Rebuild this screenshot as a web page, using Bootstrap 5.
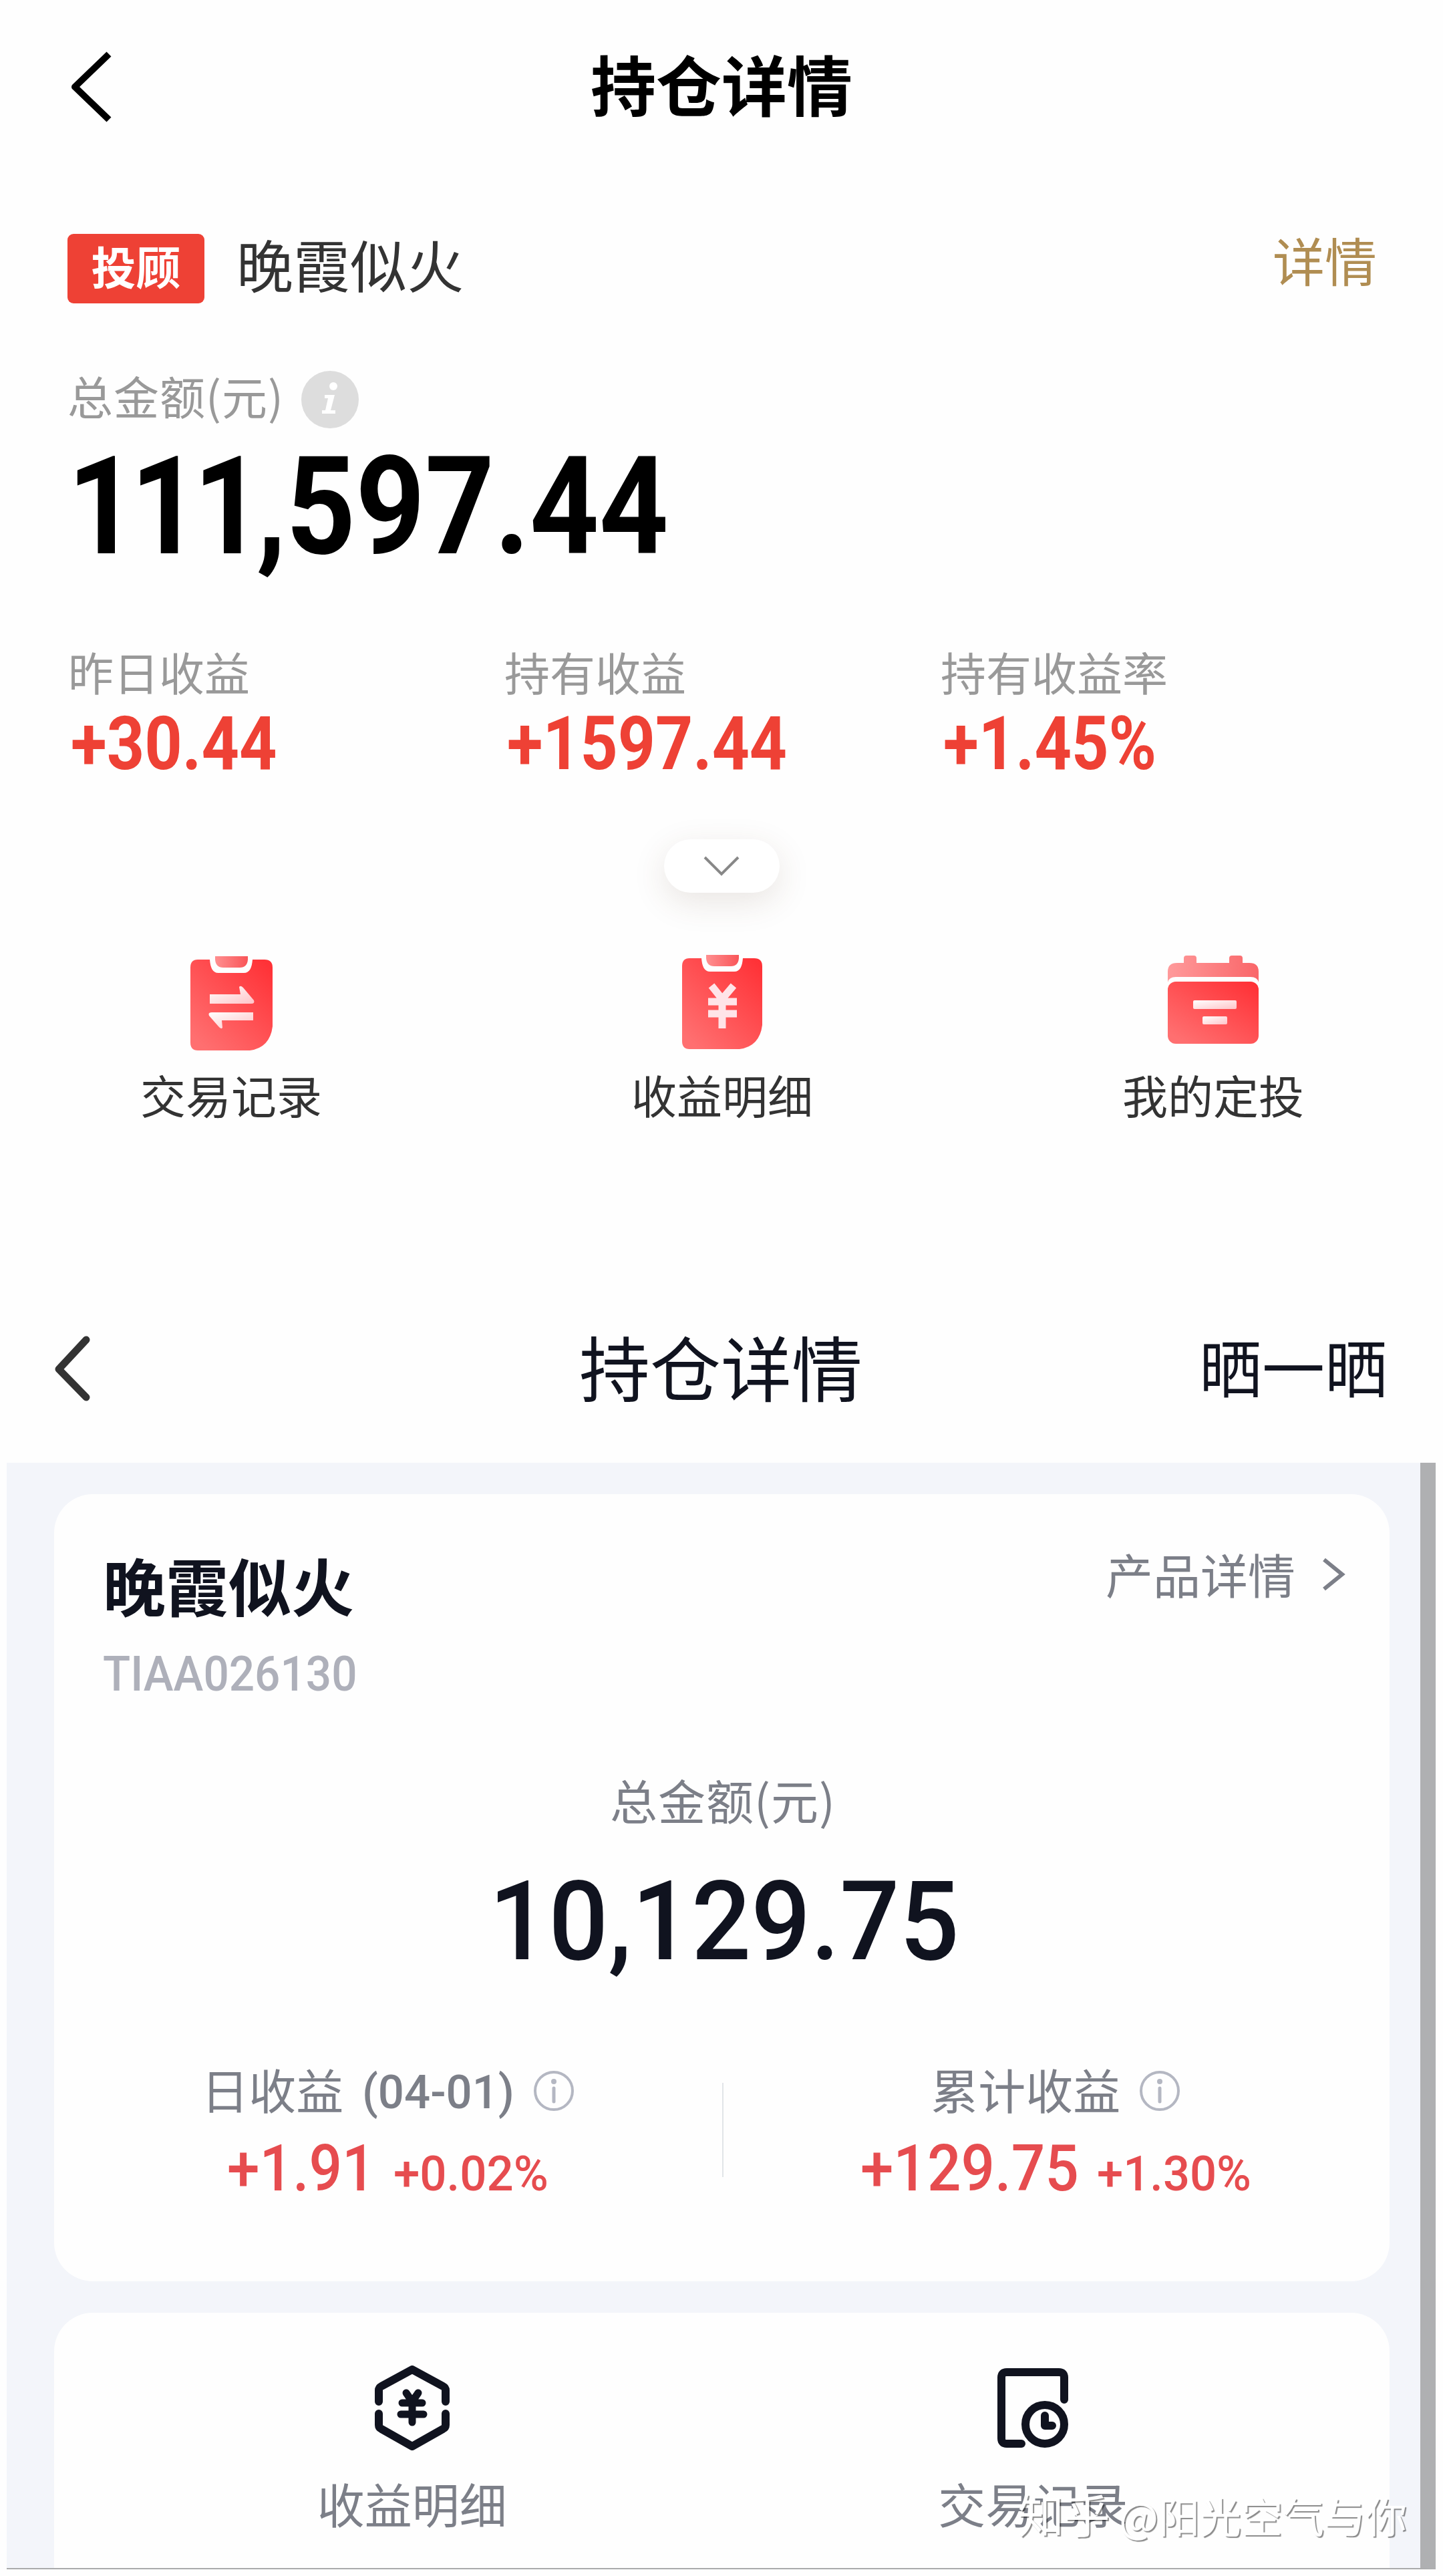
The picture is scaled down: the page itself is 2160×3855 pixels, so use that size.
<!DOCTYPE html>
<html lang="zh-CN">
    <head>
        <meta charset="UTF-8">
        <title>持仓详情</title>
        <link rel="stylesheet" href="https://cdn.jsdelivr.net/npm/bootstrap@5.3.0/dist/css/bootstrap.min.css">
        <style>
            body {
                width: 2160px;
                height: 3855px;
                overflow: hidden;
                background-color: #fefefe;
                color: #333;
                font-family: "Noto Sans CJK SC", sans-serif;
                line-height: 1;
                white-space: nowrap;
            }
            svg { display: block; flex: none; }

            /* números: estirados al ancho de data-w */
            .num {
                display: inline-block;
                vertical-align: top;
                font-family: Roboto, "Noto Sans CJK SC", sans-serif;
                line-height: 1;
            }
            .num > span {
                display: inline-block;
                transform-origin: 0 50%;
            }

            /* primera pantalla */
            .screen-a { height: 1900px; }
            .bar-a { height: 350px; padding: 74px 101px 0; }
            .bar-a .title-a { font-size: 98px; font-weight: 700; color: #000; }
            .side { width: 300px; }
            .name-row { height: 104px; padding: 0 99px 0 101px; }
            .tag {
                width: 205px;
                height: 104px;
                border-radius: 9px;
                background: #ee4135;
                color: #fff;
                font-size: 67px;
                font-weight: 700;
                padding-bottom: 12px;
            }
            .fund-a { font-size: 85px; margin: 1px 0 0 48px; }
            .link-a { font-size: 78px; color: #b08d52; margin-top: -1px; }
            .total-a { padding: 0 101px; margin-top: 101px; height: 102px; }
            .total-a .gray-a { margin: 3px 26px 0 0; letter-spacing: 1px; }
            .gray-a { font-size: 68px; color: #999; }
            .amount-a { padding-left: 101px; font-size: 204px; font-weight: 700; color: #000; height: 314px; }
            .amount-a .ones { letter-spacing: -11px; }
            .stats-a { padding-left: 102px; }
            .stats-a .cell { width: 653px; }
            .stats-a .num { font-size: 112px; font-weight: 700; color: #ee4135; margin: 18px 0 0 4px; }
            .pill {
                width: 173px;
                height: 80px;
                margin: 87px auto 0;
                border-radius: 40px;
                background: #fff;
                box-shadow: 0 14px 50px rgba(90, 60, 40, .13);
            }
            .acts-a { padding: 0 208px 0 210px; margin-top: 92px; }
            .acts-a .act { width: 272px; font-size: 68px; }
            .acts-a svg { margin-bottom: 30px; }

            /* segunda pantalla */
            .bar-b { height: 289px; padding: 90px 83px 0 81px; color: #10131f; }
            .bar-b .title-b { font-size: 106px; }
            .bar-b .share { font-size: 94px; margin-top: 6px; }
            .panel {
                width: 2139px;
                height: 1656px;
                margin-left: 10px;
                padding: 47px 46px 0 71px;
                overflow: hidden;
                background: #f3f5fa;
                border-right: 23px solid #afb0b2;
                border-bottom: 2px solid #aaabac;
            }
            .box {
                border-radius: 58px;
                background: #fefefe;
                color: #7c7f88;
                font-size: 71px;
            }
            .box-main { height: 1178px; padding-top: 88px; }
            .box-main .top-line { padding: 0 66px 0 73px; height: 145px; }
            .fund-b { font-size: 94px; font-weight: 700; color: #10131f; }
            .more { margin-top: -5px; }
            .more svg { margin: 12px 0 0 39px; }
            .code { font-size: 73px; font-weight: 500; color: #aeb0ba; padding-left: 73px; height: 188px; }
            .total-b { letter-spacing: 1px; padding-left: 3px; }
            .amount-b { font-size: 166px; font-weight: 500; color: #10131f; margin-top: 65px; padding-left: 6px; height: 297px; }
            .split { width: 2px; height: 141px; background: #e2e5e8; top: 27px; left: 50%; }
            .info { margin: 8px 0 0 28px; }
            .gain { color: #e64c4f; font-weight: 500; margin-top: 36px; }
            .gain .big { font-size: 96px; }
            .gain .pct { font-size: 73px; margin-left: 27px; }
            .day { font-size: 71px; font-weight: 500; margin: 5px 0 -5px 28px; }
            .box-acts { height: 440px; margin-top: 47px; padding: 79px 69px 0 71px; }
            .box-acts svg { height: 127px; margin-bottom: 43px; }
            .watermark {
                right: 54px;
                top: 3727px;
                font-size: 62px;
                color: #fff;
                text-shadow: 2px 2px 1px rgba(0, 0, 0, .45);
            }
            .watermark .site { font-size: 69px; }
        </style>
    </head>
    <body class="position-relative">

        <section class="screen-a">
            <div class="bar-a d-flex justify-content-between">
                <div class="side">
                    <svg width="72" height="112" viewBox="0 0 72 112"><path d="M62 7 L11 56 L62 105" fill="none" stroke="#000" stroke-width="10" stroke-linejoin="round"/></svg>
                </div>
                <div class="title-a">持仓详情</div>
                <div class="side"></div>
            </div>

            <div class="name-row d-flex align-items-start">
                <div class="tag d-flex align-items-center justify-content-center">投顾</div>
                <div class="fund-a">晚霞似火</div>
                <div class="link-a ms-auto">详情</div>
            </div>

            <div class="total-a d-flex">
                <div class="gray-a">总金额(元)</div>
                <svg width="86" height="86" viewBox="0 0 86 86">
                    <circle cx="43" cy="43" r="43" fill="#ddd"/>
                    <circle cx="48" cy="23" r="6" fill="#fff"/>
                    <path d="M35 36 H50 L44 59 H51 V64 H31 V59 H36 L40 41 H35 Z" fill="#fff"/>
                </svg>
            </div>
            <div class="amount-a"><span class="num" data-w="900"><span><span class="ones">111</span>,597.44</span></span></div>

            <div class="stats-a d-flex">
                <div class="cell">
                    <div class="gray-a">昨日收益</div>
                    <span class="num" data-w="309"><span>+30.44</span></span>
                </div>
                <div class="cell">
                    <div class="gray-a">持有收益</div>
                    <span class="num" data-w="419"><span>+1597.44</span></span>
                </div>
                <div class="cell">
                    <div class="gray-a">持有收益率</div>
                    <span class="num" data-w="319"><span>+1.45%</span></span>
                </div>
            </div>

            <div class="pill d-flex align-items-center justify-content-center">
                <svg width="54" height="32" viewBox="0 0 54 32"><path d="M2 3 L27 28 L52 3" fill="none" stroke="#888" stroke-width="4"/></svg>
            </div>

            <div class="acts-a d-flex justify-content-between">
                <div class="act d-flex flex-column align-items-center">
                    <svg width="124" height="146" viewBox="0 0 124 146">
                        <defs>
                            <linearGradient id="rojo" x1="1" y1="0.1" x2="0.2" y2="1">
                                <stop offset="0" stop-color="#ff3237"/>
                                <stop offset="1" stop-color="#ff6f70"/>
                            </linearGradient>
                            <linearGradient id="claro" x1="0" y1="0" x2="1" y2="0">
                                <stop offset="0" stop-color="#ff8f90"/>
                                <stop offset="1" stop-color="#f95558"/>
                            </linearGradient>
                            <linearGradient id="blanco" x1="0" y1="0" x2="1" y2="1">
                                <stop offset="0" stop-color="#fff"/>
                                <stop offset="1" stop-color="#ffc4c8"/>
                            </linearGradient>
                        </defs>
                        <path d="M12 8 H30 C31 20 34 28 43 28 H81 C90 28 93 20 94 8 H112 Q124 8 124 20 V108 Q120 140 90 144 H12 Q1 144 1 132 V20 Q1 8 12 8 Z" fill="url(#rojo)"/>
                        <path d="M38 3 H87 V8 Q86 20 75 20 H50 Q39 20 38 8 Z" fill="url(#claro)"/>
                        <path d="M30 60 H76 L74 49 Q76 46 80 50 L96 69 Q98 74 92 74 H30 Z" fill="url(#blanco)"/>
                        <path d="M95 87 V99 H48 L49 110 Q47 113 43 108 L29 92 Q27 87 33 87 Z" fill="url(#blanco)"/>
                    </svg>
                    <div>交易记录</div>
                </div>
                <div class="act d-flex flex-column align-items-center">
                    <svg width="124" height="146" viewBox="0 0 124 146">
                        <path d="M13 6 H31 C32 18 35 26 44 26 H80 C89 26 92 18 93 6 H110 Q122 6 122 18 V106 Q118 138 88 142 H13 Q2 142 2 130 V18 Q2 6 13 6 Z" fill="url(#rojo)"/>
                        <path d="M38 1 H87 V6 Q86 18 75 18 H50 Q39 18 38 6 Z" fill="url(#claro)"/>
                        <path d="M46 47 L62 67 L79 47 M62 66 V111 M41 71 H84 M41 89 H84" fill="none" stroke="#ffe4e8" stroke-width="11"/>
                    </svg>
                    <div>收益明细</div>
                </div>
                <div class="act d-flex flex-column align-items-center">
                    <svg width="136" height="146" viewBox="0 0 136 146">
                        <path d="M24 13 V6 Q24 2 28 2 H39 Q43 2 43 6 V13 H92 V6 Q92 2 96 2 H108 Q112 2 112 6 V13 H122 Q136 13 136 26 V42 Q134 34 124 34 H12 Q2 34 0 42 V26 Q0 13 14 13 Z" fill="url(#claro)" opacity=".9"/>
                        <rect x="0" y="41" width="136" height="93" rx="12" fill="url(#rojo)"/>
                        <rect x="38" y="69" width="65" height="13" rx="2" fill="url(#blanco)"/>
                        <rect x="52" y="93" width="37" height="12" rx="2" fill="url(#blanco)"/>
                    </svg>
                    <div>我的定投</div>
                </div>
            </div>
        </section>

        <section>
            <div class="bar-b d-flex justify-content-between">
                <div class="side">
                    <svg width="56" height="110" viewBox="0 0 56 110"><path d="M48 15 L7 59 L48 101" fill="none" stroke="#333" stroke-width="11" stroke-linecap="round" stroke-linejoin="round"/></svg>
                </div>
                <div class="title-b">持仓详情</div>
                <div class="side share text-end">晒一晒</div>
            </div>

            <div class="panel">
                <div class="box box-main">
                    <div class="top-line d-flex justify-content-between">
                        <div class="fund-b">晚霞似火</div>
                        <div class="more d-flex">
                            <div>产品详情</div>
                            <svg width="36" height="50" viewBox="0 0 36 50"><path d="M4 3 L31 25 L4 47" fill="none" stroke="#7c7f88" stroke-width="6"/></svg>
                        </div>
                    </div>
                    <div class="code"><span class="num" data-w="381"><span>TIAA026130</span></span></div>
                    <div class="total-b text-center">总金额(元)</div>
                    <div class="amount-b text-center"><span class="num" data-w="704"><span>10,129.75</span></span></div>

                    <div class="d-flex position-relative">
                        <div class="w-50 d-flex flex-column align-items-center">
                            <div class="d-flex">
                                <div>日收益</div>
                                <span class="num day" data-w="228"><span>(04-01)</span></span>
                                <svg class="info" width="62" height="62" viewBox="0 0 62 62">
                                    <circle cx="31" cy="31" r="28" fill="none" stroke="#b4b7c2" stroke-width="4"/>
                                    <circle cx="31" cy="17" r="4" fill="#b4b7c2"/>
                                    <path d="M31 27 V47" stroke="#b4b7c2" stroke-width="5" stroke-linecap="round"/>
                                </svg>
                            </div>
                            <div class="gain d-flex align-items-baseline">
                                <span class="num big" data-w="222"><span>+1.91</span></span>
                                <span class="num pct" data-w="232"><span>+0.02%</span></span>
                            </div>
                        </div>
                        <div class="split position-absolute"></div>
                        <div class="w-50 d-flex flex-column align-items-center">
                            <div class="d-flex">
                                <div>累计收益</div>
                                <svg class="info" width="62" height="62" viewBox="0 0 62 62">
                                    <circle cx="31" cy="31" r="28" fill="none" stroke="#b4b7c2" stroke-width="4"/>
                                    <circle cx="31" cy="17" r="4" fill="#b4b7c2"/>
                                    <path d="M31 27 V47" stroke="#b4b7c2" stroke-width="5" stroke-linecap="round"/>
                                </svg>
                            </div>
                            <div class="gain d-flex align-items-baseline">
                                <span class="num big" data-w="327"><span>+129.75</span></span>
                                <span class="num pct" data-w="231"><span>+1.30%</span></span>
                            </div>
                        </div>
                    </div>
                </div>

                <div class="box box-acts d-flex">
                    <div class="w-50 d-flex flex-column align-items-center">
                        <svg width="112" height="127" viewBox="0 0 112 127">
                            <g fill="none" stroke="#10131f" stroke-linecap="round" stroke-linejoin="round">
                                <path d="M6 54 V37 Q6 33 10 31 L56 6 L102 31 Q106 33 106 37 V54" stroke-width="12"/>
                                <path d="M6 72 V89 Q6 93 10 95 L56 121 L102 95 Q106 93 106 89 V72" stroke-width="12"/>
                                <path d="M47 41 L56 54 L65 41 M56 54 V85 M41 56 H71 M39 73 H73" stroke-width="11"/>
                            </g>
                        </svg>
                        <div>收益明细</div>
                    </div>
                    <div class="w-50 d-flex flex-column align-items-center">
                        <svg width="106" height="127" viewBox="0 0 106 127">
                            <g fill="none" stroke="#10131f" stroke-width="12" stroke-linecap="round" stroke-linejoin="round">
                                <path d="M36 117 H14 Q6 117 6 109 V18 Q6 10 14 10 H92 Q100 10 100 18 V51"/>
                                <circle cx="71" cy="88" r="29"/>
                                <path d="M71 75 V90 H82"/>
                            </g>
                        </svg>
                        <div>交易记录</div>
                    </div>
                </div>
            </div>
        </section>

        <div class="watermark position-absolute"><span class="site">知乎</span> @阳光空气与你</div>

        <script src="https://cdn.jsdelivr.net/npm/bootstrap@5.3.0/dist/js/bootstrap.bundle.min.js"></script>
        <script>
            // ajusta cada cifra a su ancho
            document.querySelectorAll(".num").forEach(n => {
                const texto = n.firstElementChild;
                const ancho = parseFloat(n.dataset.w);
                const real = texto.offsetWidth;
                n.style.width = ancho + "px";
                texto.style.transform = `scaleX(${ancho / real})`;
            });
        </script>
    </body>
</html>
